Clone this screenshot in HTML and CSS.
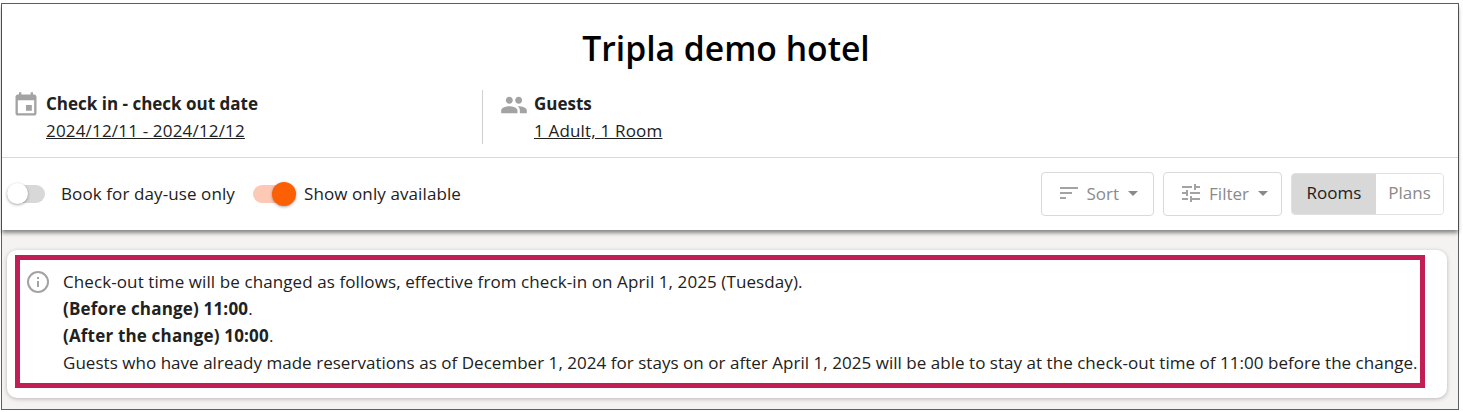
FILE: index.html
```html
<!DOCTYPE html>
<html lang="en">
<head>
    <meta charset="UTF-8">
    <meta name="viewport" content="width=device-width, initial-scale=1.0">
    <title>Tripla demo hotel</title>
    <link rel="stylesheet" href="styles.css">
</head>
<body>
    <div class="frame">
        <div class="top">
            <h1 class="hotel">Tripla demo hotel</h1>
            <div class="search">
                <div class="field dates">
                    <svg class="field-icon" viewBox="0 0 24 24" width="28" height="28"><path d="M17 12h-5v5h5v-5zM16 1v2H8V1H6v2H5c-1.11 0-1.99.9-1.99 2L3 19c0 1.1.89 2 2 2h14c1.1 0 2-.9 2-2V5c0-1.1-.9-2-2-2h-1V1h-2zm3 18H5V8h14v11z"/></svg>
                    <div>
                        <div class="field-label">Check in - check out date</div>
                        <a class="field-value" href="#">2024/12/11 - 2024/12/12</a>
                    </div>
                </div>
                <div class="field guests">
                    <svg class="field-icon" viewBox="0 0 24 24" width="28" height="28"><path d="M16 11c1.66 0 2.99-1.34 2.99-3S17.66 5 16 5c-1.66 0-3 1.34-3 3s1.34 3 3 3zm-8 0c1.66 0 2.99-1.34 2.99-3S9.66 5 8 5C6.34 5 5 6.34 5 8s1.34 3 3 3zm0 2c-2.33 0-7 1.17-7 3.5V19h14v-2.5c0-2.33-4.67-3.5-7-3.5zm8 0c-.29 0-.62.02-.97.05 1.16.84 1.97 1.97 1.97 3.45V19h6v-2.5c0-2.33-4.67-3.5-7-3.5z"/></svg>
                    <div>
                        <div class="field-label">Guests</div>
                        <a class="field-value" href="#">1 Adult, 1 Room</a>
                    </div>
                </div>
            </div>
            <div class="toolbar">
                <label class="switch">
                    <span class="track"><span class="thumb"></span></span>
                    <span class="switch-text">Book for day-use only</span>
                </label>
                <label class="switch on">
                    <span class="track"><span class="thumb"></span></span>
                    <span class="switch-text">Show only available</span>
                </label>
                <div class="actions">
                    <button class="btn sort">
                        <svg viewBox="0 0 24 24" width="24" height="24"><path d="M3 18h6v-2H3v2zM3 6v2h18V6H3zm0 7h12v-2H3v2z"/></svg>
                        Sort<span class="caret"></span>
                    </button>
                    <button class="btn filter">
                        <svg viewBox="0 0 24 24" width="24" height="24"><path d="M3 17v2h6v-2H3zM3 5v2h10V5H3zm10 16v-2h8v-2h-8v-2h-2v6h2zM7 9v2H3v2h4v2h2V9H7zm14 4v-2H11v2h10zm-6-4h2V7h4V5h-4V3h-2v6z"/></svg>
                        Filter<span class="caret"></span>
                    </button>
                    <div class="view-group">
                        <button class="view rooms active">Rooms</button>
                        <button class="view plans">Plans</button>
                    </div>
                </div>
            </div>
        </div>
        <div class="content">
            <div class="notice-card">
                <div class="notice">
                    <svg class="info" viewBox="0 0 24 24" width="24" height="24"><circle cx="12" cy="12" r="10" fill="none" stroke="#a3a3a3" stroke-width="2"/><rect x="11" y="11" width="2" height="6" fill="#a3a3a3"/><rect x="11" y="7" width="2" height="2" fill="#a3a3a3"/></svg>
                    <div class="notice-text">
                        <p class="lead">Check-out time will be changed as follows, effective from check-in on April 1, 2025 (Tuesday).</p>
                        <p><strong>(Before change) 11:00</strong>.</p>
                        <p><strong>(After the change) 10:00</strong>.</p>
                        <p>Guests who have already made reservations as of December 1, 2024 for stays on or after April 1, 2025 will be able to stay at the check-out time of 11:00 before the change.</p>
                    </div>
                </div>
            </div>
        </div>
    </div>
</body>
</html>
```

FILE: styles.css
```css
body{
    margin:0;
    padding:3px 4px 2px 1px;
    background-color:#fff;
    font-family:"Open Sans","Noto Sans",sans-serif;
    color:#212121;
}
.frame{
    border:1px solid #5f5f5f;
    height:407px;
    box-sizing:border-box;
    display:flex;
    flex-direction:column;
    background-color:#f4f3f1;
}
.top{
    background-color:#fff;
    height:226px;
    box-shadow:0 3px 4px rgba(0,0,0,0.45);
    flex:none;
}
.hotel{
    margin:0;
    padding:20px 8px 0 0;
    height:66px;
    box-sizing:border-box;
    text-align:center;
    font-size:33.7px;
    line-height:48px;
    font-weight:600;
    color:#000;
}
.search{
    display:flex;
    height:67px;
    padding-top:20px;
    border-bottom:1px solid #d9d9d9;
}
.field{
    display:flex;
    gap:6px;
    height:54px;
    box-sizing:border-box;
}
.dates{
    width:481px;
    padding-left:10px;
    border-right:1px solid #cfcfcf;
}
.guests{
    padding-left:17px;
}
.field-icon{
    fill:#a3a3a3;
    flex:none;
    margin-top:1px;
}
.field-label{
    font-size:17px;
    line-height:27px;
    font-weight:700;
}
.field-value{
    font-size:17px;
    line-height:28px;
    letter-spacing:0.18px;
    color:#212121;
}
.toolbar{
    display:flex;
    align-items:center;
    height:72px;
    padding:0 14px 0 5px;
}
.switch{
    display:flex;
    align-items:center;
}
.track{
    display:block;
    width:38px;
    height:18px;
    border-radius:9px;
    background-color:#d8d8d8;
    position:relative;
}
.thumb{
    position:absolute;
    left:0;
    top:-2px;
    width:21px;
    height:21px;
    border-radius:50%;
    background-color:#fff;
    box-shadow:0 1px 3px rgba(0,0,0,0.35);
}
.on{
    margin-left:18px;
}
.on .track{
    background-color:#fdc9b6;
}
.on .thumb{
    left:auto;
    right:-5px;
    width:24px;
    height:24px;
    top:-3px;
    background-color:#fb6005;
}
.switch-text{
    font-size:17px;
    margin-left:16px;
    padding-bottom:2px;
    letter-spacing:0.1px;
}
.on .switch-text{
    margin-left:13px;
}
.actions{
    display:flex;
    align-items:center;
    margin-left:auto;
    gap:9px;
}
.btn{
    display:flex;
    align-items:center;
    height:44px;
    border:1px solid #d9d9d9;
    border-radius:4px;
    background-color:#fff;
    color:#8a8a8a;
    font-family:inherit;
    font-size:17px;
    padding:0 14px 2px 15px;
    gap:6px;
}
.sort{
    padding-right:15px;
}
.filter{
    padding-right:13px;
}
.btn svg{
    fill:#a3a3a3;
    flex:none;
}
.caret{
    width:0;
    height:0;
    border-left:5px solid transparent;
    border-right:5px solid transparent;
    border-top:5px solid #8a8a8a;
    margin-left:3px;
}
.view-group{
    display:flex;
    height:42px;
    border:1px solid #e0e0e0;
    border-radius:4px;
    overflow:hidden;
    box-sizing:border-box;
}
.view{
    border:none;
    background-color:#fff;
    color:#8a8a8a;
    font-family:inherit;
    font-size:17px;
    padding:0 0 3px;
    text-align:center;
}
.rooms{
    width:84px;
}
.plans{
    width:67px;
}
.active{
    background-color:#d8d8d8;
    color:#212121;
}
.content{
    flex:1;
    padding:20px 11px 11px 5px;
}
.notice-card{
    background-color:#fff;
    border-radius:10px;
    box-shadow:0 1px 4px rgba(0,0,0,0.25);
    padding:5px 22px 10px 8px;
    height:148px;
    box-sizing:border-box;
}
.notice{
    border:5px solid #c21e56;
    height:100%;
    box-sizing:border-box;
    display:flex;
    padding:8px 0 0 6px;
    gap:13px;
}
.info{
    flex:none;
    margin-top:2px;
}
.notice-text p{
    margin:0;
    font-size:17px;
    line-height:27px;
    letter-spacing:0.035px;
    white-space:nowrap;
}
.notice-text .lead{
    letter-spacing:0.095px;
}
.notice-text strong{
    letter-spacing:0.18px;
}
```
